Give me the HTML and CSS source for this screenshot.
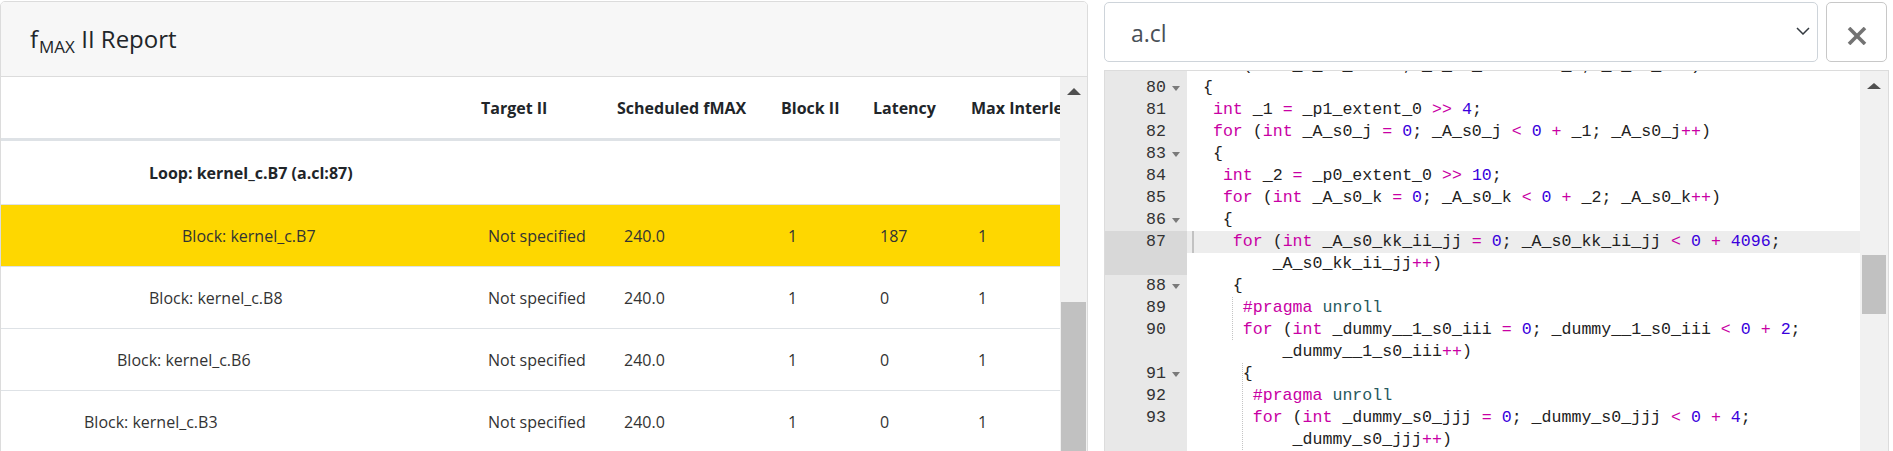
FILE: index.html
```html
<!DOCTYPE html>
<html>
<head>
<meta charset="utf-8">
<title>fMAX II Report</title>
<link rel="stylesheet" href="styles.css">
</head>
<body>
<div class="page">
  <section class="card">
    <header class="card-head">
      <h1 class="title">f<sub>MAX</sub> II Report</h1>
    </header>
    <div class="card-body">
      <div class="tbl">
        <div class="tr th-row">
          <div class="th"></div>
          <div class="th">Target II</div>
          <div class="th">Scheduled fMAX</div>
          <div class="th">Block II</div>
          <div class="th">Latency</div>
          <div class="th">Max Interleaving Iterations</div>
        </div>
        <div class="tr loop-row">
          <div class="td name lvl-b strong">Loop: kernel_c.B7 (a.cl:87)</div>
          <div class="td"></div><div class="td"></div><div class="td"></div><div class="td"></div><div class="td"></div>
        </div>
        <div class="tr sel">
          <div class="td name lvl-a">Block: kernel_c.B7</div>
          <div class="td">Not specified</div><div class="td">240.0</div><div class="td">1</div><div class="td">187</div><div class="td">1</div>
        </div>
        <div class="tr">
          <div class="td name lvl-b">Block: kernel_c.B8</div>
          <div class="td">Not specified</div><div class="td">240.0</div><div class="td">1</div><div class="td">0</div><div class="td">1</div>
        </div>
        <div class="tr">
          <div class="td name lvl-c">Block: kernel_c.B6</div>
          <div class="td">Not specified</div><div class="td">240.0</div><div class="td">1</div><div class="td">0</div><div class="td">1</div>
        </div>
        <div class="tr">
          <div class="td name lvl-d">Block: kernel_c.B3</div>
          <div class="td">Not specified</div><div class="td">240.0</div><div class="td">1</div><div class="td">0</div><div class="td">1</div>
        </div>
      </div>
      <div class="vscroll left-scroll">
        <div class="arrow-up"></div>
        <div class="thumb"></div>
      </div>
    </div>
  </section>

  <section class="source">
    <div class="toolbar">
      <div class="select">
        <span class="select-text">a.cl</span>
        <svg class="chev" width="14" height="8" viewBox="0 0 14 8"><polyline points="1,1 7,7 13,1" fill="none" stroke="#343a40" stroke-width="1.5"/></svg>
      </div>
      <button class="close" type="button">
        <svg width="20" height="18" viewBox="0 0 20 18"><line x1="2" y1="1" x2="18" y2="17" stroke="#737373" stroke-width="3.6"/><line x1="18" y1="1" x2="2" y2="17" stroke="#737373" stroke-width="3.6"/></svg>
      </button>
    </div>
    <div class="editor">
      <div class="lines">
        <div class="ln"><div class="gut"><span class="num">79</span><span class="fold"></span></div><div class="code"><div class="vl"> <span class="k">for</span> (<span class="k">int</span> _A_s0_i <span class="k">=</span> <span class="n">0</span>; _A_s0_i <span class="k">&lt;</span> <span class="n">0</span> <span class="k">+</span> _0; _A_s0_i<span class="k">++</span>)</div></div></div>
        <div class="ln"><div class="gut"><span class="num">80</span><span class="fold"><i class="tri"></i></span></div><div class="code"><div class="vl"> {</div></div></div>
        <div class="ln"><div class="gut"><span class="num">81</span><span class="fold"></span></div><div class="code"><div class="vl">  <span class="k">int</span> _1 <span class="k">=</span> _p1_extent_0 <span class="k">&gt;&gt;</span> <span class="n">4</span>;</div></div></div>
        <div class="ln"><div class="gut"><span class="num">82</span><span class="fold"></span></div><div class="code"><div class="vl">  <span class="k">for</span> (<span class="k">int</span> _A_s0_j <span class="k">=</span> <span class="n">0</span>; _A_s0_j <span class="k">&lt;</span> <span class="n">0</span> <span class="k">+</span> _1; _A_s0_j<span class="k">++</span>)</div></div></div>
        <div class="ln"><div class="gut"><span class="num">83</span><span class="fold"><i class="tri"></i></span></div><div class="code"><div class="vl">  {</div></div></div>
        <div class="ln"><div class="gut"><span class="num">84</span><span class="fold"></span></div><div class="code"><div class="vl">   <span class="k">int</span> _2 <span class="k">=</span> _p0_extent_0 <span class="k">&gt;&gt;</span> <span class="n">10</span>;</div></div></div>
        <div class="ln"><div class="gut"><span class="num">85</span><span class="fold"></span></div><div class="code"><div class="vl">   <span class="k">for</span> (<span class="k">int</span> _A_s0_k <span class="k">=</span> <span class="n">0</span>; _A_s0_k <span class="k">&lt;</span> <span class="n">0</span> <span class="k">+</span> _2; _A_s0_k<span class="k">++</span>)</div></div></div>
        <div class="ln"><div class="gut"><span class="num">86</span><span class="fold"><i class="tri"></i></span></div><div class="code"><div class="vl">   {</div></div></div>
        <div class="ln"><div class="gut active"><span class="num">87</span><span class="fold"></span></div><div class="code"><div class="vl active">    <span class="k">for</span> (<span class="k">int</span> _A_s0_kk_ii_jj <span class="k">=</span> <span class="n">0</span>; _A_s0_kk_ii_jj <span class="k">&lt;</span> <span class="n">0</span> <span class="k">+</span> <span class="n">4096</span>;</div><div class="vl">        _A_s0_kk_ii_jj<span class="k">++</span>)</div></div></div>
        <div class="ln"><div class="gut"><span class="num">88</span><span class="fold"><i class="tri"></i></span></div><div class="code"><div class="vl">    {</div></div></div>
        <div class="ln"><div class="gut"><span class="num">89</span><span class="fold"></span></div><div class="code"><div class="vl g4">     <span class="k">#pragma</span> <span class="t">unroll</span></div></div></div>
        <div class="ln"><div class="gut"><span class="num">90</span><span class="fold"></span></div><div class="code"><div class="vl g4">     <span class="k">for</span> (<span class="k">int</span> _dummy__1_s0_iii <span class="k">=</span> <span class="n">0</span>; _dummy__1_s0_iii <span class="k">&lt;</span> <span class="n">0</span> <span class="k">+</span> <span class="n">2</span>;</div><div class="vl">         _dummy__1_s0_iii<span class="k">++</span>)</div></div></div>
        <div class="ln"><div class="gut"><span class="num">91</span><span class="fold"><i class="tri"></i></span></div><div class="code"><div class="vl g5">     {</div></div></div>
        <div class="ln"><div class="gut"><span class="num">92</span><span class="fold"></span></div><div class="code"><div class="vl g5">      <span class="k">#pragma</span> <span class="t">unroll</span></div></div></div>
        <div class="ln"><div class="gut"><span class="num">93</span><span class="fold"></span></div><div class="code"><div class="vl g5">      <span class="k">for</span> (<span class="k">int</span> _dummy_s0_jjj <span class="k">=</span> <span class="n">0</span>; _dummy_s0_jjj <span class="k">&lt;</span> <span class="n">0</span> <span class="k">+</span> <span class="n">4</span>;</div><div class="vl g5">          _dummy_s0_jjj<span class="k">++</span>)</div></div></div>
        <div class="ln"><div class="gut"><span class="num">94</span><span class="fold"><i class="tri"></i></span></div><div class="code"><div class="vl g5">      {</div></div></div>
      </div>
      <div class="vscroll right-scroll">
        <div class="arrow-up"></div>
        <div class="thumb"></div>
      </div>
    </div>
  </section>
</div>
</body>
</html>
```

FILE: styles.css
```css
* { box-sizing: border-box; }

html, body {
  margin: 0;
  height: 451px;
  overflow: hidden;
  background: #ffffff;
}

body {
  font-family: "Open Sans", "Noto Sans", sans-serif;
  color: #212529;
}

.page {
  display: flex;
  align-items: flex-start;
  gap: 16px;
}

/* ---------- left card ---------- */
.card {
  flex: none;
  width: 1088px;
  height: 480px;
  margin-top: 1px;
  border: 1px solid #dcdcdc;
  border-radius: 5px;
  display: flex;
  flex-direction: column;
  overflow: hidden;
}

.card-head {
  flex: none;
  height: 75px;
  background: #f7f7f7;
  border-bottom: 1px solid #dcdcdc;
  display: flex;
  align-items: center;
  padding-left: 29px;
}

.title {
  margin: 0;
  font-size: 24px;
  font-weight: 400;
  line-height: 32px;
  color: #212529;
}

.title sub {
  font-size: 17px;
  line-height: 0;
  vertical-align: -5px;
  margin-left: 1px;
}

.card-body {
  flex: 1;
  min-height: 0;
  display: flex;
}

.tbl {
  flex: 1;
  min-width: 0;
  overflow: hidden;
}

.tr {
  display: grid;
  grid-template-columns: 475px 136px 164px 92px 98px 230px;
  height: 62px;
  border-bottom: 1px solid #dee2e6;
  font-size: 16px;
  color: #333333;
}

.th-row {
  height: 64px;
  border-bottom: 3px solid #dee2e6;
}

.loop-row {
  height: 64px;
}

.sel {
  background: #fed700;
}

.th, .td {
  display: flex;
  align-items: center;
  white-space: nowrap;
}

.th {
  padding-left: 5px;
  font-weight: 700;
  color: #212529;
}

.td {
  padding-left: 12px;
}

.strong {
  font-weight: 700;
  color: #212529;
}

.name.lvl-a { padding-left: 181px; }
.name.lvl-b { padding-left: 148px; }
.name.lvl-c { padding-left: 116px; }
.name.lvl-d { padding-left: 83px; }

/* ---------- scrollbars ---------- */
.vscroll {
  flex: none;
  background: #f1f1f1;
  display: flex;
  flex-direction: column;
  align-items: center;
}

.arrow-up {
  width: 0;
  height: 0;
  border-left: 7px solid transparent;
  border-right: 7px solid transparent;
  border-bottom: 7px solid #505050;
}

.thumb {
  background: #c1c1c1;
}

.left-scroll {
  width: 27px;
}
.left-scroll .arrow-up { margin-top: 11px; }
.left-scroll .thumb {
  width: 25px;
  height: 300px;
  margin-top: 207px;
}

.right-scroll {
  width: 28px;
}
.right-scroll .arrow-up {
  margin-top: 12px;
  border-bottom-width: 6px;
}
.right-scroll .thumb {
  width: 24px;
  height: 59px;
  margin-top: 166px;
}

/* ---------- right: source ---------- */
.source {
  flex: none;
  width: 785px;
  display: flex;
  flex-direction: column;
}

.toolbar {
  margin-top: 2px;
  height: 60px;
  display: flex;
  gap: 8px;
}

.select {
  width: 714px;
  height: 60px;
  border: 1px solid #ced4da;
  border-radius: 5px;
  background: #fff;
  display: flex;
  align-items: center;
  justify-content: space-between;
  padding: 2px 7px 0 26px;
}

.select-text {
  font-size: 23px;
  line-height: 30px;
  color: #495057;
}

.chev {
  margin-top: -4px;
}

.close {
  width: 61px;
  height: 60px;
  margin: 0;
  padding: 8px 0 0 0;
  border: 1px solid #c8c8c8;
  border-radius: 5px;
  background: #fff;
  display: flex;
  align-items: center;
  justify-content: center;
}

.editor {
  margin-top: 8px;
  height: 400px;
  border: 1px solid #dcdcdc;
  display: flex;
  overflow: hidden;
}

.lines {
  flex: 1;
  min-width: 0;
  margin-top: -16px;
  background: linear-gradient(to right, #e8e8e8 82px, #ffffff 82px);
  font-family: "Liberation Mono", "DejaVu Sans Mono", monospace;
  font-size: 16.6px;
  line-height: 22px;
}

.ln {
  display: grid;
  grid-template-columns: 82px 1fr;
}

.gut {
  display: flex;
  justify-content: flex-end;
  align-items: flex-start;
  color: #333333;
  background: #e8e8e8;
}

.gut.active {
  background: #d8d8d8;
}

.num {
  line-height: 22px;
}

.fold {
  flex: none;
  width: 21px;
  height: 22px;
  display: flex;
  align-items: center;
}

.tri {
  display: block;
  width: 0;
  height: 0;
  margin: 1px 0 0 6px;
  border-left: 4px solid transparent;
  border-right: 4px solid transparent;
  border-top: 5px solid #7a7a7a;
}

.code {
  min-width: 0;
  overflow: hidden;
  color: #222222;
}

.vl {
  white-space: pre;
  padding-left: 6px;
  height: 22px;
}

.vl.active {
  background: linear-gradient(#c2c2c2, #c2c2c2) no-repeat 5px 0 / 2px 100%, #ededed;
}

.vl.g4 {
  background: repeating-linear-gradient(to bottom, #c4c4c4 0 1px, transparent 1px 2px) no-repeat 45px 0 / 1px 100%;
}

.vl.g5 {
  background: repeating-linear-gradient(to bottom, #c4c4c4 0 1px, transparent 1px 2px) no-repeat 55px 0 / 1px 100%;
}

.k { color: #c800a4; }
.n { color: #3a00dc; }
.t { color: #275a5e; }
```
